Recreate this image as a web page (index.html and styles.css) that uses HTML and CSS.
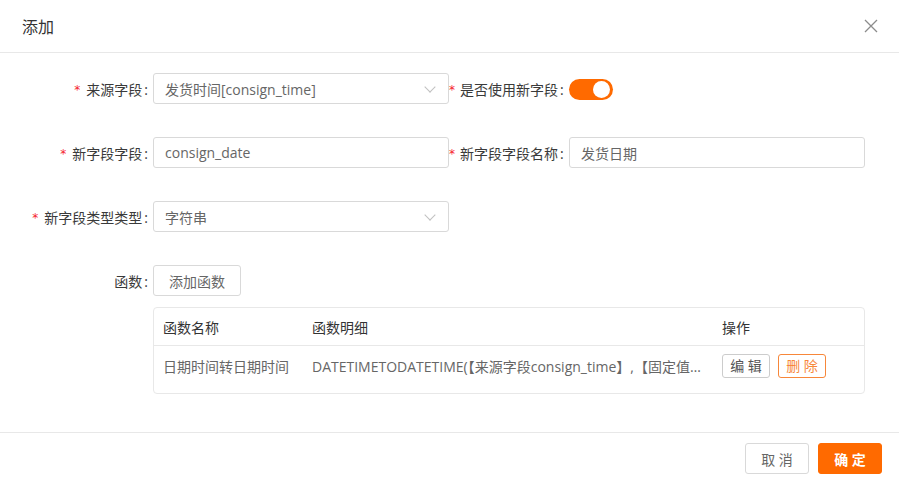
FILE: index.html
```html
<!DOCTYPE html>
<html lang="zh-CN">
<head>
  <meta charset="UTF-8" />
  <title>添加</title>
  <link rel="stylesheet" href="styles.css">
</head>
<body>
  <div class="dialog">
    <header class="dlg-head">
      <span class="dlg-title">添加</span>
      <span class="dlg-close">
        <svg width="14" height="14" viewBox="0 0 14 14"><path d="M1 1L13 13M13 1L1 13" stroke="#8c8c8c" stroke-width="1.3" fill="none"/></svg>
      </span>
    </header>

    <section class="dlg-body">
      <div class="form-row">
        <label class="lbl"><i>*</i>来源字段<b>:</b></label>
        <div class="field select">发货时间[consign_time]<span class="arrow"></span></div>
        <label class="lbl lbl2"><i>*</i>是否使用新字段<b>:</b></label>
        <div class="switch on"><span class="knob"></span></div>
      </div>

      <div class="form-row">
        <label class="lbl"><i>*</i>新字段字段<b>:</b></label>
        <div class="field">consign_date</div>
        <label class="lbl lbl2"><i>*</i>新字段字段名称<b>:</b></label>
        <div class="field">发货日期</div>
      </div>

      <div class="form-row">
        <label class="lbl"><i>*</i>新字段类型类型<b>:</b></label>
        <div class="field select">字符串<span class="arrow"></span></div>
      </div>

      <div class="form-row">
        <label class="lbl">函数<b>:</b></label>
        <button class="btn add-fn">添加函数</button>
      </div>

      <div class="fn-table">
        <div class="tr th">
          <div class="td c-name">函数名称</div>
          <div class="td c-detail">函数明细</div>
          <div class="td c-op">操作</div>
        </div>
        <div class="tr tb">
          <div class="td c-name">日期时间转日期时间</div>
          <div class="td c-detail">DATETIMETODATETIME(【来源字段consign_time】,【固定值YYYY-MM-DD】)</div>
          <div class="td c-op">
            <button class="mini">编&nbsp;辑</button>
            <button class="mini danger">删&nbsp;除</button>
          </div>
        </div>
      </div>
    </section>

    <footer class="dlg-foot">
      <button class="btn cancel">取 消</button>
      <button class="btn primary">确 定</button>
    </footer>
  </div>
</body>
</html>
```

FILE: styles.css
```css
*{box-sizing:border-box;margin:0;padding:0;}
body{background:#fff;color:#333;font-family:"Open Sans","Noto Sans CJK SC",sans-serif;font-size:14px;}
button{font-family:inherit;cursor:pointer;background:#fff;}

.dialog{width:899px;height:485px;display:flex;flex-direction:column;}
.dlg-head{height:53px;display:flex;align-items:center;justify-content:space-between;padding:0 21px 0 22px;border-bottom:1px solid #e8e8e8;flex:none;}
.dlg-title{font-size:16px;color:#333;}
.dlg-close{display:flex;width:14px;height:14px;}

.dlg-body{flex:1;padding-top:20px;}
.form-row{display:flex;align-items:center;height:31px;margin-bottom:33px;}
.lbl{width:148px;margin-right:5px;text-align:right;color:#3a3a3a;white-space:nowrap;}
.lbl i{font-style:normal;color:#f5222d;margin-right:6px;font-family:"DejaVu Sans",sans-serif;font-size:12px;position:relative;top:-1px;}
.lbl b{font-weight:normal;margin-left:2px;}
.lbl2{width:115px;margin-right:5px;text-align:left;}
.lbl2 i{margin-right:5px;}
.field{position:relative;width:296px;height:31px;border:1px solid #d9d9d9;border-radius:3px;padding:0 11px;display:flex;align-items:center;color:#666;}
.select .arrow{position:absolute;right:14px;top:9px;width:8px;height:8px;border-right:1px solid #c0c0c0;border-bottom:1px solid #c0c0c0;transform:rotate(45deg);}

.switch{width:44px;height:21px;border-radius:11px;background:#ff6a00;position:relative;margin-top:1px;}
.switch .knob{position:absolute;right:3px;top:2px;width:17px;height:17px;border-radius:50%;background:#fff;}

.btn{height:31px;border:1px solid #d9d9d9;border-radius:3px;padding:0 15px;font-size:14px;color:#666;}
.add-fn{width:88px;padding:0;}

.fn-table{margin:-22px 0 0 153px;width:712px;border:1px solid #e8e8e8;border-radius:4px;}
.tr{display:flex;align-items:center;color:#666;}
.tr.th{height:38px;border-bottom:1px solid #e8e8e8;color:#333;}
.tr.tb{height:47px;padding-bottom:8px;}
.td{padding-left:9px;white-space:nowrap;overflow:hidden;text-overflow:ellipsis;}
.c-name{width:149px;}
.c-detail{width:410px;padding-right:8px;}
.c-op{flex:1;display:flex;gap:8px;padding-left:9px;}
.mini{width:48px;height:24px;padding:0;border:1px solid #ccc;border-radius:3px;font-size:14px;line-height:22px;color:#555;}
.mini.danger{border-color:#f7873a;color:#f7873a;}

.dlg-foot{height:53px;border-top:1px solid #e8e8e8;display:flex;justify-content:flex-end;align-items:flex-start;gap:9px;padding:10px 17px 0 0;flex:none;}
.cancel{width:64px;padding:0;}
.primary{width:64px;padding:0;background:#ff6a00;border-color:#ff6a00;color:#fff;font-weight:bold;}
```
